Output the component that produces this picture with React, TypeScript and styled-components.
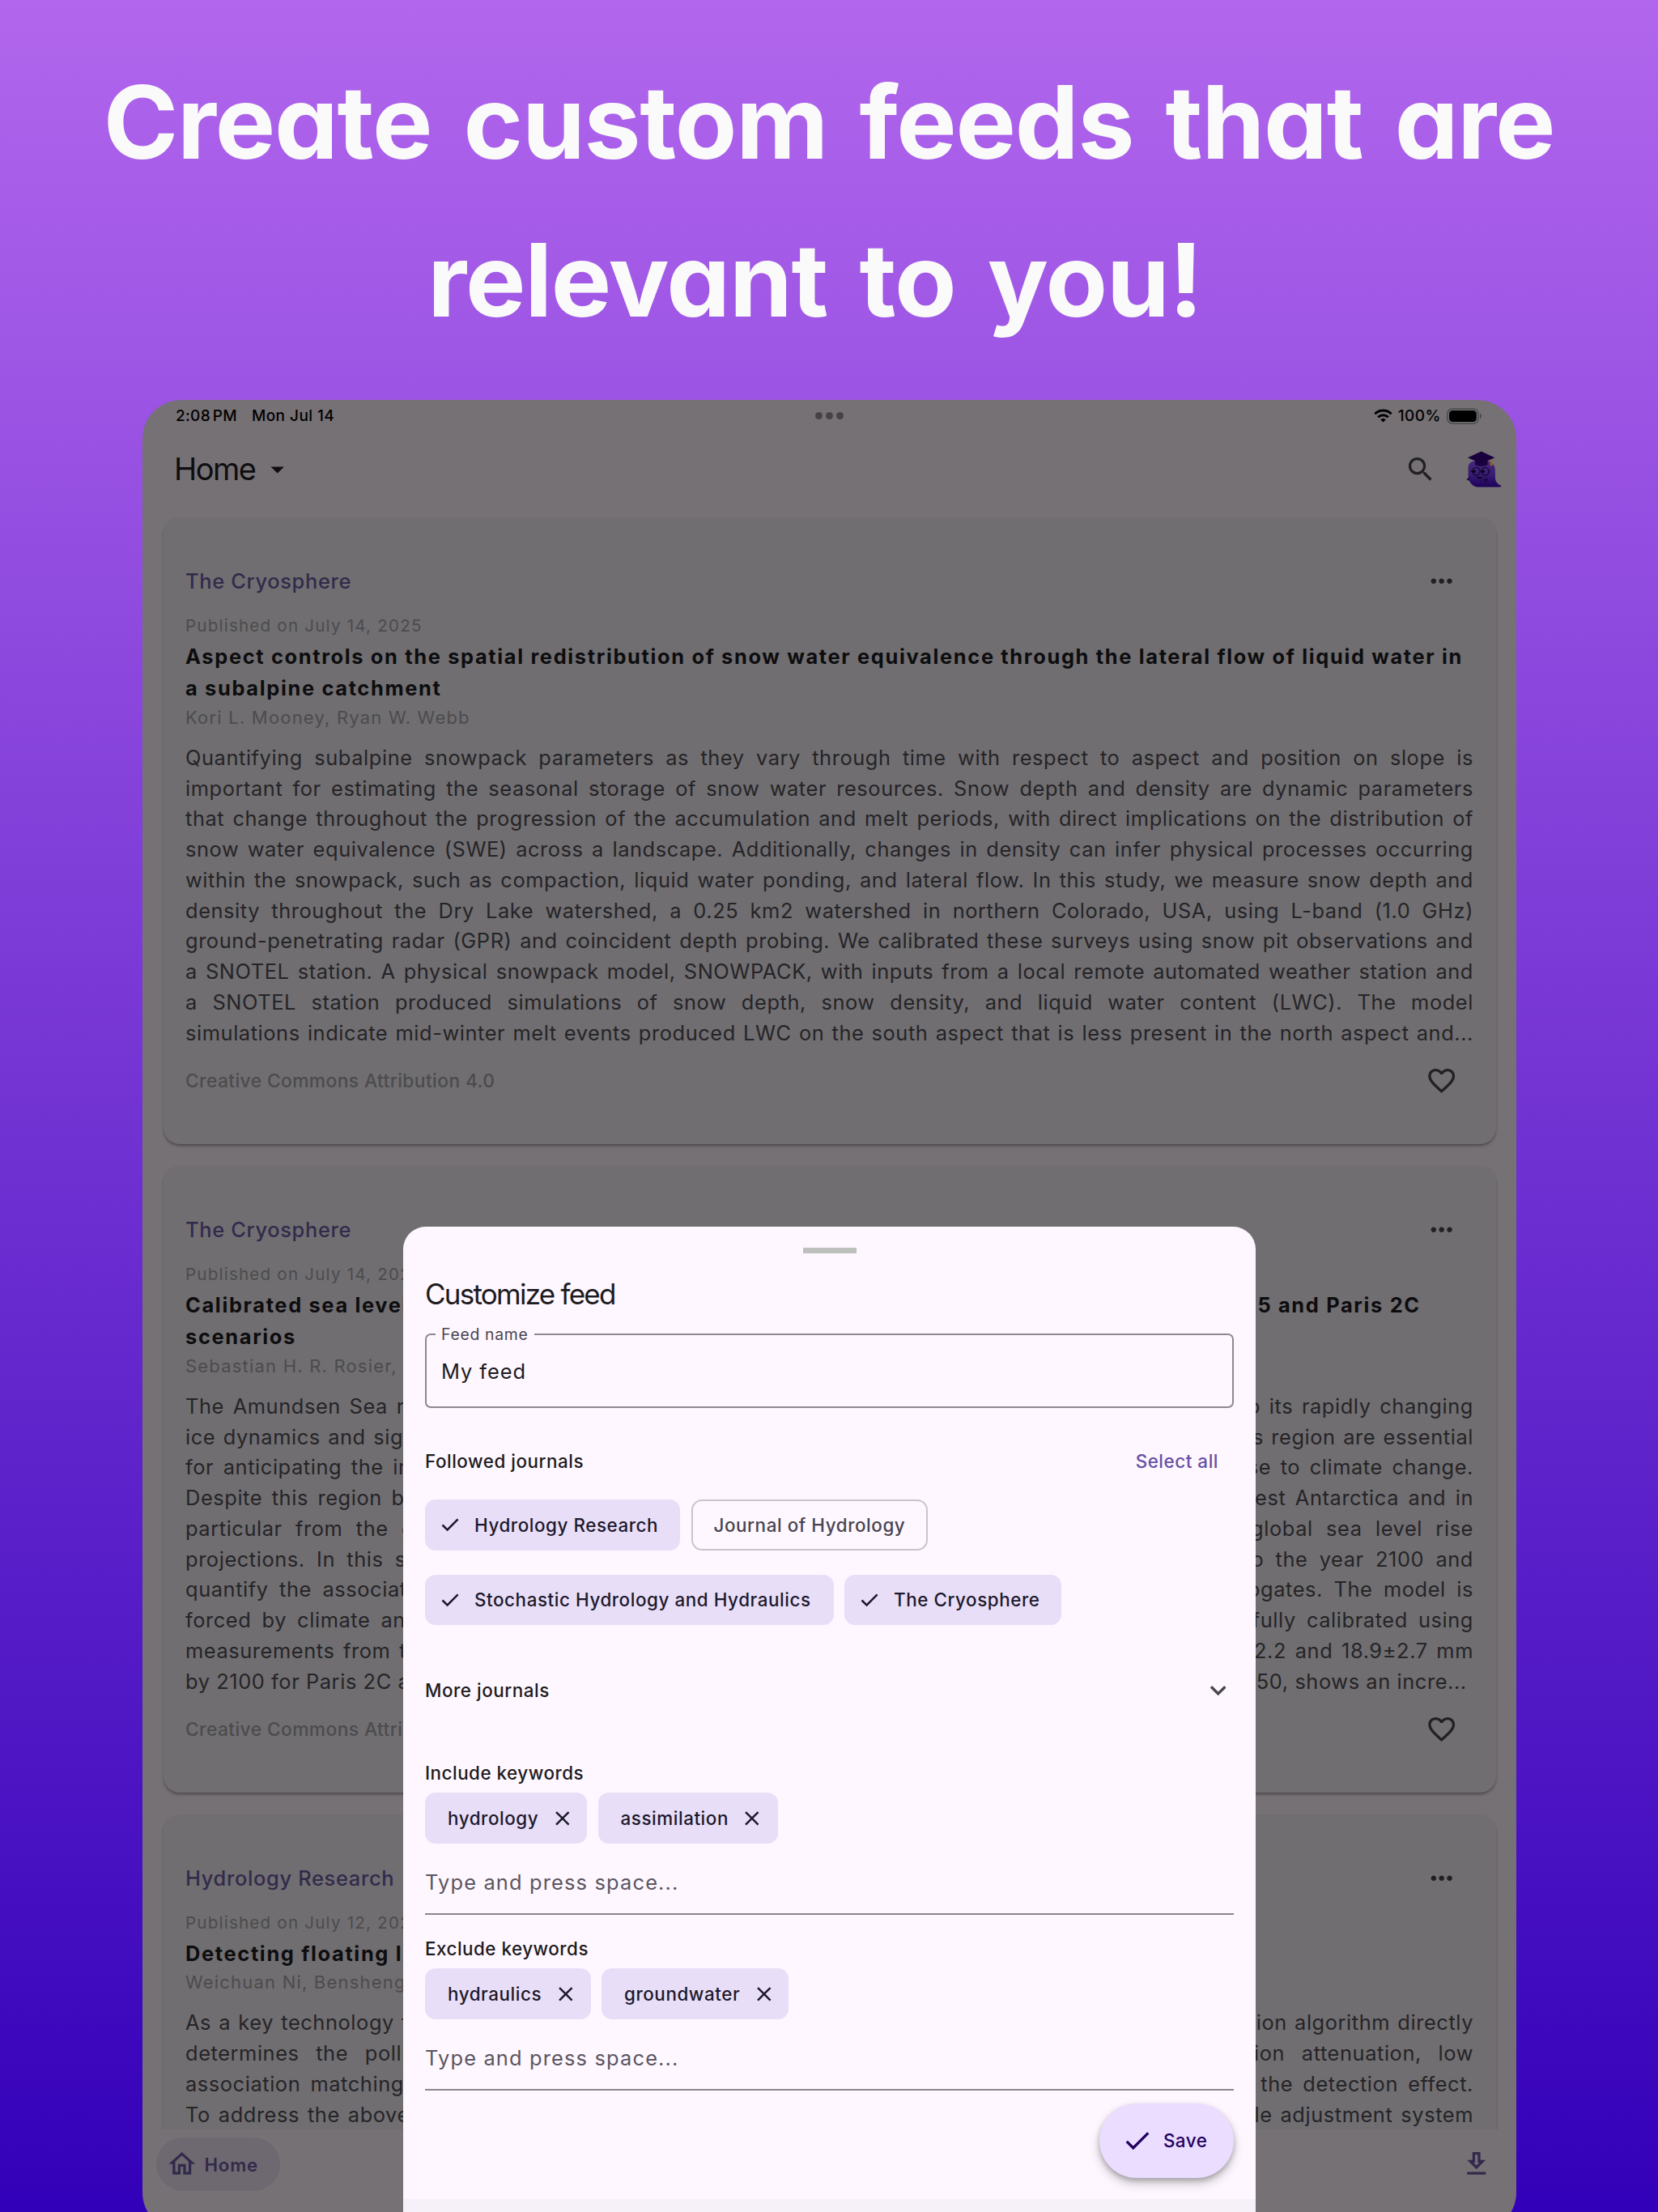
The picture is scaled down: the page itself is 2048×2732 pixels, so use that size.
import React from "react";
import styled, { createGlobalStyle } from "styled-components";

const GlobalStyle = createGlobalStyle`
  body { margin: 0; }
  *, *::before, *::after { box-sizing: border-box; }
`;

const Page = styled.main`
  position: relative;
  width: 2048px;
  height: 2732px;
  overflow: hidden;
  background: linear-gradient(180deg, #b266ed 0%, #3300b9 100%);
  font-family: Inter, Roboto, "Liberation Sans", sans-serif;
  color: #1d1b20;
`;

const Headline = styled.h1`
  margin: 0;
  padding-top: 53px;
  height: 494px;
  font-size: 125px;
  font-weight: 700;
  line-height: 195px;
  letter-spacing: -1.2px;
  word-spacing: 11px;
  text-align: center;
  color: #fafafa;
  font-feature-settings: "cv11" 1, "ss03" 1;
  white-space: nowrap;
`;

const HeadlineRow = styled.span<{ $shift?: number }>`
  display: block;
  padding-right: ${(p) => p.$shift ?? 0}px;
`;

const Tablet = styled.section`
  display: flex;
  flex-direction: column;
  width: 1697px;
  height: 2262px;
  margin-left: 176px;
  border-radius: 48px;
  overflow: hidden;
  background: #767175;
`;

const StatusBar = styled.div`
  display: grid;
  grid-template-columns: 1fr auto 1fr;
  align-items: center;
  height: 39px;
  padding: 0 42px 0 41px;
  font-size: 19px;
  font-weight: 500;
  color: #000;
`;

const StatusLeft = styled.div`
  display: flex;
  gap: 18px;
`;

const Clock = styled.span`
  letter-spacing: 0.3px;
  word-spacing: -2.5px;
`;

const StatusDate = styled.span`
  letter-spacing: 0.45px;
`;

const StatusRight = styled.div`
  display: flex;
  justify-content: flex-end;
  align-items: center;
`;

const Percent = styled.span`
  margin: 0 7px 0 7px;
  letter-spacing: 0.5px;
`;

const WindowDots = styled.div`
  display: flex;
  gap: 4px;
`;

const WindowDot = styled.i`
  width: 9px;
  height: 9px;
  border-radius: 50%;
  background: #464346;
`;

const AppBar = styled.header`
  display: flex;
  align-items: center;
  height: 92.5px;
  padding: 0 17px 0 39px;
  color: #0e0d10;
`;

const AppTitle = styled.div`
  flex: 1;
  display: flex;
  align-items: center;
  gap: 8px;
  font-size: 38px;
  letter-spacing: -1.5px;
`;

const AppActions = styled.div`
  display: flex;
  align-items: center;
  gap: 37px;
  color: #212023;
`;

const Feed = styled.div`
  display: flex;
  flex-direction: column;
  gap: 26.5px;
  height: 2004.5px;
  padding: 13px 25px 0 26px;
  overflow: hidden;
`;

const Card = styled.article`
  flex: none;
  height: 774.5px;
  padding: 49px 28px 0 27px;
  border-radius: 20px;
  background: #706e71;
  box-shadow: 0 3px 4px -1px rgba(0, 0, 0, 0.3), 0 2px 2px rgba(0, 0, 0, 0.1);
`;

const CardHeader = styled.div`
  display: flex;
  align-items: center;
  justify-content: space-between;
  height: 60px;
  padding-right: 20px;
  color: #212023;
`;

const CardFooter = styled(CardHeader)`
  margin-top: 10.5px;
`;

const Journal = styled.span`
  font-size: 25.4px;
  font-weight: 500;
  letter-spacing: 0.68px;
  color: #322a4b;
`;

const Published = styled.div`
  margin-top: 10px;
  font-size: 20.6px;
  line-height: 30px;
  letter-spacing: 1.2px;
  color: #4c4b4d;
`;

const CardTitle = styled.h2`
  margin: 3.2px 0 0;
  font-size: 25.4px;
  font-weight: 700;
  line-height: 39.4px;
  letter-spacing: 1.66px;
  color: #0d0d0f;
  white-space: nowrap;
`;

const TitleLine = styled.span`
  display: block;
`;

const Authors = styled.div`
  margin-top: 1px;
  font-size: 22px;
  line-height: 30px;
  letter-spacing: 1.2px;
  color: #4c4b4d;
`;

const Abstract = styled.div`
  margin-top: 16.3px;
  font-size: 25.4px;
  line-height: 37.76px;
  letter-spacing: 0.58px;
  color: #252427;
`;

const AbstractLine = styled.div<{ $loose?: boolean }>`
  white-space: nowrap;
  text-align: justify;
  text-align-last: ${(p) => (p.$loose ? "left" : "justify")};
`;

const License = styled.span`
  font-size: 22.8px;
  font-weight: 500;
  letter-spacing: 0.4px;
  color: #4c4b4d;
`;

const BottomNav = styled.nav`
  display: flex;
  justify-content: space-between;
  align-items: flex-start;
  padding: 10px 30px 0 17px;
  color: #322a4b;
`;

const NavPill = styled.div`
  display: flex;
  align-items: center;
  gap: 8px;
  width: 153px;
  height: 66px;
  padding-left: 12px;
  border-radius: 33px;
  background: #6e6970;
  font-size: 22.2px;
  font-weight: 600;
  letter-spacing: 0.9px;
`;

const NavAction = styled.div`
  display: flex;
  align-items: center;
  height: 66px;
`;

const Sheet = styled.aside`
  position: absolute;
  left: 498px;
  top: 1515px;
  width: 1053px;
  height: 1217px;
  display: flex;
  flex-direction: column;
  border-radius: 28px 28px 0 0;
  background: #fef7ff;
  overflow: hidden;
`;

const SheetBody = styled.div`
  display: flex;
  flex-direction: column;
  height: 1201px;
  padding: 26px 27px 0 27px;
`;

const SheetFooter = styled.div`
  flex: 1;
  background: #f6f0f8;
`;

const Handle = styled.i`
  align-self: center;
  width: 66px;
  height: 7px;
  background: #bdbfbd;
`;

const SheetTitle = styled.h3`
  margin: 28px 0 0;
  font-size: 35px;
  font-weight: 400;
  line-height: 44px;
  letter-spacing: -1.75px;
`;

const Field = styled.label`
  position: relative;
  display: flex;
  align-items: center;
  margin-top: 27px;
  height: 92px;
  padding-left: 18px;
  border: 2px solid #8d8891;
  border-radius: 7px;
  font-size: 25.4px;
  letter-spacing: 0.95px;
`;

const FieldLabel = styled.span`
  position: absolute;
  left: 11px;
  top: -14px;
  padding: 0 7px;
  background: #fef7ff;
  font-size: 19.4px;
  line-height: 26px;
  letter-spacing: 0.7px;
  color: #49454f;
`;

const SectionRow = styled.div<{ $top: number; $height: number; $inset?: number }>`
  display: flex;
  align-items: center;
  justify-content: space-between;
  margin-top: ${(p) => p.$top}px;
  height: ${(p) => p.$height}px;
  padding-right: ${(p) => p.$inset ?? 0}px;
  font-size: 22.4px;
  font-weight: 500;
  letter-spacing: 0.54px;

  svg { color: #49454f; }
`;

const LinkText = styled.span`
  color: #6750a4;
`;

const ChipRow = styled.div<{ $top: number }>`
  display: flex;
  gap: 13.5px;
  margin-top: ${(p) => p.$top}px;
`;

const Chip = styled.div<{ $width: number; $outlined?: boolean; $check?: boolean }>`
  display: flex;
  align-items: center;
  width: ${(p) => p.$width}px;
  height: 62.6px;
  padding-left: ${(p) => (p.$check ? 20 : p.$outlined ? 26 : 28)}px;
  border: ${(p) => (p.$outlined ? "2px solid #cac4d0" : "none")};
  border-radius: 13px;
  background: ${(p) => (p.$outlined ? "transparent" : "#e8def8")};
  color: ${(p) => (p.$outlined ? "#49454f" : "#1d192b")};
  font-size: 22.4px;
  font-weight: 500;
  letter-spacing: 0.57px;
  white-space: nowrap;

  svg:first-child { margin-right: 19px; }
  svg:last-child { margin-left: 14.5px; }
`;

const Label = styled.div<{ $top: number }>`
  margin-top: ${(p) => p.$top}px;
  font-size: 22.4px;
  font-weight: 500;
  line-height: 32px;
  letter-spacing: 0.5px;
`;

const KeywordInput = styled.div`
  display: flex;
  align-items: center;
  margin-top: 9.4px;
  height: 78.5px;
  border-bottom: 2px solid #8a858d;
  font-size: 25.4px;
  letter-spacing: 1.17px;
  color: #5a565f;
`;

const SaveButton = styled.div`
  align-self: flex-end;
  display: flex;
  align-items: center;
  gap: 13px;
  width: 166px;
  height: 92.5px;
  margin-top: 15.7px;
  padding-left: 26.5px;
  border-radius: 46px;
  background: #eaddff;
  color: #21005d;
  font-size: 22.4px;
  font-weight: 500;
  letter-spacing: 0.5px;
  box-shadow: 0 7px 13px rgba(0, 0, 0, 0.2), 0 3px 6px rgba(0, 0, 0, 0.22);
`;

const PATHS = {
  search:
    "M15.5 14h-.79l-.28-.27A6.471 6.471 0 0 0 16 9.5 6.5 6.5 0 1 0 9.5 16c1.61 0 3.09-.59 4.23-1.57l.27.28v.79l5 4.99L20.49 19l-4.99-5zm-6 0C7.01 14 5 11.99 5 9.5S7.01 5 9.5 5 14 7.01 14 9.5 11.99 14 9.5 14z",
  caret: "M7 10l5 5 5-5z",
  more:
    "M6 10c-1.1 0-2 .9-2 2s.9 2 2 2 2-.9 2-2-.9-2-2-2zm12 0c-1.1 0-2 .9-2 2s.9 2 2 2 2-.9 2-2-.9-2-2-2zm-6 0c-1.1 0-2 .9-2 2s.9 2 2 2 2-.9 2-2-.9-2-2-2z",
  heart:
    "M16.5 3c-1.74 0-3.41.81-4.5 2.09C10.91 3.81 9.24 3 7.5 3 4.42 3 2 5.42 2 8.5c0 3.78 3.4 6.86 8.55 11.54L12 21.35l1.45-1.32C18.6 15.36 22 12.28 22 8.5 22 5.42 19.58 3 16.5 3zm-4.4 15.55l-.1.1-.1-.1C7.14 14.24 4 11.39 4 8.5 4 6.5 5.5 5 7.5 5c1.54 0 3.04.99 3.57 2.36h1.87C13.46 5.99 14.96 5 16.5 5c2 0 3.5 1.5 3.5 3.5 0 2.89-3.14 5.74-7.9 10.05z",
  home: "M12 5.69l5 4.5V18h-2v-6H9v6H7v-7.81l5-4.5M12 3L2 12h3v8h6v-6h2v6h6v-8h3L12 3z",
  download: "M19 9h-4V3H9v6H5l7 7 7-7zm-8 2V5h2v6h1.17L12 13.17 9.83 11H11zm-6 7h14v2H5z",
  check: "M9 16.17 4.83 12l-1.42 1.41L9 19 21 7l-1.41-1.41z",
  close: "M19 6.41 17.59 5 12 10.59 6.41 5 5 6.41 10.59 12 5 17.59 6.41 19 12 13.41 17.59 19 19 17.59 13.41 12z",
  expand: "M16.59 8.59 12 13.17 7.41 8.59 6 10l6 6 6-6z",
};

function Icon({ name, size = 39.4 }: { name: keyof typeof PATHS; size?: number }) {
  return (
    <svg width={size} height={size} viewBox="0 0 24 24" fill="currentColor">
      <path d={PATHS[name]} />
    </svg>
  );
}

function ChipCheck() {
  return (
    <svg width="22" height="18" viewBox="0 0 22 18" fill="none" stroke="currentColor" strokeWidth="2.5">
      <path d="M1.5 9.5 L7.6 15.4 L20.6 2.4" />
    </svg>
  );
}

function Wifi() {
  return (
    <svg width="23" height="17" viewBox="0 0 23 17" fill="none" stroke="#000" strokeWidth="3">
      <path d="M1.4 6.2 a14.4 14.4 0 0 1 20.2 0" />
      <path d="M5.2 10.2 a9 9 0 0 1 12.6 0" />
      <path d="M11.5 16.6 L8.2 13.2 a4.8 4.8 0 0 1 6.6 0z" fill="#000" stroke="none" />
    </svg>
  );
}

function Battery() {
  return (
    <svg width="44" height="20" viewBox="0 0 44 20">
      <rect x="0.9" y="0.9" width="38" height="18.2" rx="6" fill="none" stroke="#4b494b" strokeWidth="1.5" />
      <rect x="3" y="3" width="33.8" height="14" rx="4.2" fill="#000" />
      <path d="M41 6.6 a3.9 3.9 0 0 1 0 6.8z" fill="#4b494b" />
    </svg>
  );
}

function Mascot() {
  return (
    <svg width="45" height="45" viewBox="0 0 45 45">
      <defs>
        <linearGradient id="ghost" x1="0" y1="0" x2="0" y2="1">
          <stop offset="0" stopColor="#46297a" />
          <stop offset="0.55" stopColor="#371a73" />
          <stop offset="1" stopColor="#1d0058" />
        </linearGradient>
      </defs>
      <path
        d="M2.6 20 C3 13.5 9 11.5 18 11.5 C28 11.5 35.4 14 35.8 23 L36 35 C37 39 40 41.5 43.5 43 C43.5 44.4 42 44.6 40 44.6 L16 44.6 C9.5 44.6 6 40.5 3.4 36.4 L0.8 35.2 L2.6 33.6 Z"
        fill="url(#ghost)"
      />
      <path d="M11 10 H26.5 V17 C23 19.4 14.5 19.4 11 17 Z" fill="#1a0340" />
      <path d="M2 8.2 L18.7 0.6 L35.4 8.2 L18.7 15.4 Z" fill="#19013d" />
      <path d="M30.5 10.5 V14" stroke="#8a6320" strokeWidth="1" />
      <path d="M29.6 14 L32.4 13.4 L33.4 17.6 L29.6 18.6 Z" fill="#8a6320" />
      <g fill="none" stroke="#0d0620" strokeWidth="1.1">
        <circle cx="12.4" cy="25.2" r="4.7" />
        <circle cx="23.6" cy="25.2" r="4.7" />
        <path d="M17.1 25 h1.8 M28.3 25 h1.6 M5.6 24.6 h2.2" />
        <path d="M0.9 35.2 l4.4 -2 M26.8 34.2 l-4.6 1.2 3.6 2.4" />
      </g>
      <circle cx="9.8" cy="25.2" r="1.8" fill="#07020f" />
      <circle cx="21" cy="25.2" r="1.8" fill="#07020f" />
      <path d="M12.6 31.4 C15 32.6 18 32.6 20.6 31.4 C19.6 34.8 13.6 34.8 12.6 31.4Z" fill="#07020f" />
    </svg>
  );
}

type Article = {
  journal: string;
  published: string;
  title: string[];
  authors: string;
  lines: string[];
  looseEnd?: boolean;
};

const ARTICLES: Article[] = [
  {
    journal: "The Cryosphere",
    published: "Published on July 14, 2025",
    title: [
      "Aspect controls on the spatial redistribution of snow water equivalence through the lateral flow of liquid water in",
      "a subalpine catchment",
    ],
    authors: "Kori L. Mooney, Ryan W. Webb",
    lines: [
      "Quantifying subalpine snowpack parameters as they vary through time with respect to aspect and position on slope is",
      "important for estimating the seasonal storage of snow water resources. Snow depth and density are dynamic parameters",
      "that change throughout the progression of the accumulation and melt periods, with direct implications on the distribution of",
      "snow water equivalence (SWE) across a landscape. Additionally, changes in density can infer physical processes occurring",
      "within the snowpack, such as compaction, liquid water ponding, and lateral flow. In this study, we measure snow depth and",
      "density throughout the Dry Lake watershed, a 0.25 km2 watershed in northern Colorado, USA, using L-band (1.0 GHz)",
      "ground-penetrating radar (GPR) and coincident depth probing. We calibrated these surveys using snow pit observations and",
      "a SNOTEL station. A physical snowpack model, SNOWPACK, with inputs from a local remote automated weather station and",
      "a SNOTEL station produced simulations of snow depth, snow density, and liquid water content (LWC). The model",
      "simulations indicate mid-winter melt events produced LWC on the south aspect that is less present in the north aspect and...",
    ],
  },
  {
    journal: "The Cryosphere",
    published: "Published on July 14, 2025",
    title: [
      "Calibrated sea level contribution from the Amundsen Sea sector, West Antarctica, under RCP8.5 and Paris 2C",
      "scenarios",
    ],
    authors: "Sebastian H. R. Rosier, G. Hilmar Gudmundsson",
    lines: [
      "The Amundsen Sea region in Antarctica is a critical area for understanding future sea level rise due to its rapidly changing",
      "ice dynamics and significant contributions to global ice mass loss. Projections of sea level rise from this region are essential",
      "for anticipating the impacts on coastal communities and for developing adaptive strategies in response to climate change.",
      "Despite this region being the focus of intensive research over recent years, dynamic ice loss from West Antarctica and in",
      "particular from the glaciers of the Amundsen Sea is a major source of the uncertainty for the global sea level rise",
      "projections. In this study, we use ice sheet model simulations to make sea level rise projections to the year 2100 and",
      "quantify the associated uncertainty using a Bayesian approach that also makes use of trained surrogates. The model is",
      "forced by climate and ocean forcing for the two emissions scenarios of RCP8.5 and Paris 2C, carefully calibrated using",
      "measurements from the observational record. We find the total sea level contribution to be near 19.0±2.2 and 18.9±2.7 mm",
      "by 2100 for Paris 2C and RCP8.5 emission scenarios, respectively. A subset of these runs, extended to 2150, shows an incre...",
    ],
    looseEnd: true,
  },
  {
    journal: "Hydrology Research",
    published: "Published on July 12, 2025",
    title: ["Detecting floating litter in rivers"],
    authors: "Weichuan Ni, Bensheng Yun",
    lines: [
      "As a key technology for river water monitoring and ecological protection, the performance of the detection algorithm directly",
      "determines the pollution control levels of the river surfaces. In view of the serious information attenuation, low",
      "association matching and frequent missed detection of small floating objects in rivers, which reduce the detection effect.",
      "To address the above problems, an improved network structure is put forward with a dynamic size scale adjustment system",
    ],
  },
];

function ArticleCard({ item }: { item: Article }) {
  return (
    <Card>
      <CardHeader>
        <Journal>{item.journal}</Journal>
        <Icon name="more" />
      </CardHeader>
      <Published>{item.published}</Published>
      <CardTitle>
        {item.title.map((t) => (
          <TitleLine key={t}>{t}</TitleLine>
        ))}
      </CardTitle>
      <Authors>{item.authors}</Authors>
      <Abstract>
        {item.lines.map((line, i) => (
          <AbstractLine key={line} $loose={item.looseEnd && i === item.lines.length - 1}>
            {line}
          </AbstractLine>
        ))}
      </Abstract>
      {item.lines.length === 10 && (
        <CardFooter>
          <License>Creative Commons Attribution 4.0</License>
          <Icon name="heart" />
        </CardFooter>
      )}
    </Card>
  );
}

function KeywordChip({ text, width }: { text: string; width: number }) {
  return (
    <Chip $width={width}>
      <span>{text}</span>
      <Icon name="close" size={29.6} />
    </Chip>
  );
}

export default function App() {
  return (
    <Page>
      <GlobalStyle />
      <Headline>
        <HeadlineRow>Create custom feeds that are</HeadlineRow>
        <HeadlineRow $shift={35}>relevant to you!</HeadlineRow>
      </Headline>

      <Tablet>
        <StatusBar>
          <StatusLeft>
            <Clock>2:08 PM</Clock>
            <StatusDate>Mon Jul 14</StatusDate>
          </StatusLeft>
          <WindowDots>
            <WindowDot />
            <WindowDot />
            <WindowDot />
          </WindowDots>
          <StatusRight>
            <Wifi />
            <Percent>100%</Percent>
            <Battery />
          </StatusRight>
        </StatusBar>
        <AppBar>
          <AppTitle>
            Home
            <Icon name="caret" />
          </AppTitle>
          <AppActions>
            <Icon name="search" />
            <Mascot />
          </AppActions>
        </AppBar>
        <Feed>
          {ARTICLES.map((item) => (
            <ArticleCard key={item.title[0]} item={item} />
          ))}
        </Feed>
        <BottomNav>
          <NavPill>
            <Icon name="home" />
            Home
          </NavPill>
          <NavAction>
            <Icon name="download" />
          </NavAction>
        </BottomNav>
      </Tablet>

      <Sheet>
        <SheetBody>
          <Handle />
          <SheetTitle>Customize feed</SheetTitle>
          <Field>
            <FieldLabel>Feed name</FieldLabel>
            My feed
          </Field>
          <SectionRow $top={26} $height={79} $inset={19}>
            <span>Followed journals</span>
            <LinkText>Select all</LinkText>
          </SectionRow>
          <ChipRow $top={8}>
            <Chip $width={315} $check>
              <ChipCheck />
              <span>Hydrology Research</span>
            </Chip>
            <Chip $width={292} $outlined>
              <span>Journal of Hydrology</span>
            </Chip>
          </ChipRow>
          <ChipRow $top={30}>
            <Chip $width={504.5} $check>
              <ChipCheck />
              <span>Stochastic Hydrology and Hydraulics</span>
            </Chip>
            <Chip $width={268} $check>
              <ChipCheck />
              <span>The Cryosphere</span>
            </Chip>
          </ChipRow>
          <SectionRow $top={34.2} $height={92}>
            <span>More journals</span>
            <Icon name="expand" />
          </SectionRow>
          <Label $top={40.5}>Include keywords</Label>
          <ChipRow $top={8.2}>
            <KeywordChip text="hydrology" width={200} />
            <KeywordChip text="assimilation" width={222.5} />
          </ChipRow>
          <KeywordInput>Type and press space...</KeywordInput>
          <Label $top={26.5}>Exclude keywords</Label>
          <ChipRow $top={8.4}>
            <KeywordChip text="hydraulics" width={204.5} />
            <KeywordChip text="groundwater" width={231} />
          </ChipRow>
          <KeywordInput>Type and press space...</KeywordInput>
          <SaveButton>
            <Icon name="check" />
            Save
          </SaveButton>
        </SheetBody>
        <SheetFooter />
      </Sheet>
    </Page>
  );
}
